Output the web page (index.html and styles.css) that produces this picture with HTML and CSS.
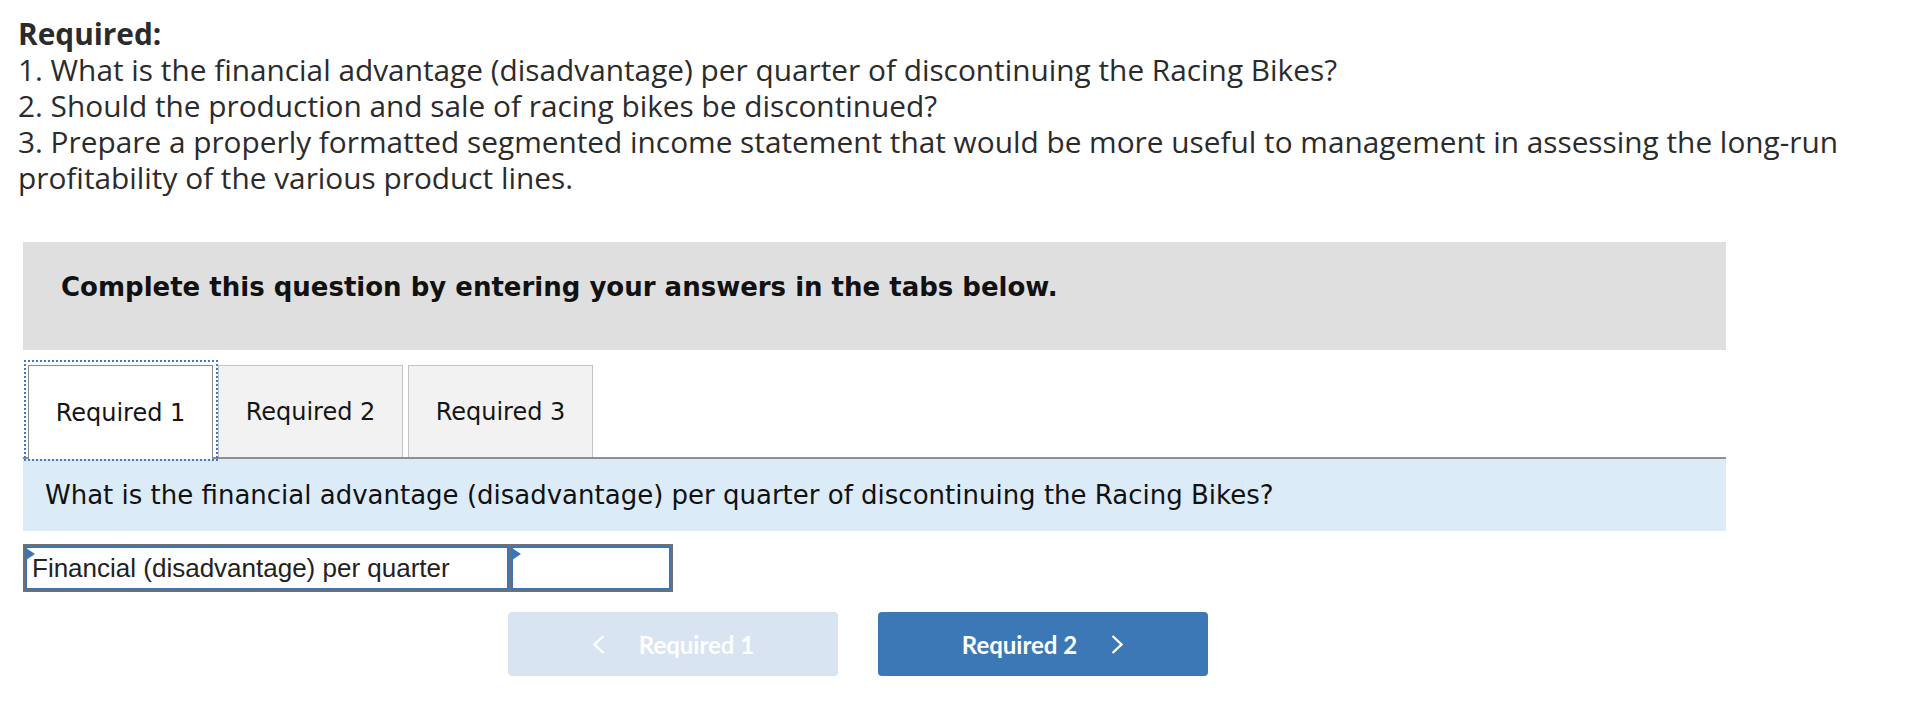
FILE: index.html
```html
<!DOCTYPE html>
<html lang="en">
<head>
<meta charset="utf-8">
<title>Required</title>
<link rel="stylesheet" href="styles.css">
</head>
<body>
<div class="required">
  <div class="req-line req-title">Required:</div>
  <div class="req-line">1. What is the financial advantage (disadvantage) per quarter of discontinuing the Racing Bikes?</div>
  <div class="req-line">2. Should the production and sale of racing bikes be discontinued?</div>
  <div class="req-line">3. Prepare a properly formatted segmented income statement that would be more useful to management in assessing the long-run profitability of the various product lines.</div>
</div>

<div class="panel">
  <div class="instructions">Complete this question by entering your answers in the tabs below.</div>

  <div class="tabs">
    <div class="tab tab-active">Required 1</div>
    <div class="tab">Required 2</div>
    <div class="tab">Required 3</div>
  </div>

  <div class="prompt">What is the financial advantage (disadvantage) per quarter of discontinuing the Racing Bikes?</div>

  <div class="grid">
    <div class="cell cell-label">Financial (disadvantage) per quarter</div>
    <div class="cell cell-input"></div>
  </div>

  <div class="nav">
    <div class="btn btn-prev">
      <svg class="chev" width="13" height="19" viewBox="0 0 13 19"><polyline points="11.5,1 2.5,9.5 11.5,18" fill="none" stroke="#ffffff" stroke-width="2.4"/></svg>
      <span>Required 1</span>
    </div>
    <div class="btn btn-next">
      <span>Required 2</span>
      <svg class="chev" width="13" height="19" viewBox="0 0 13 19"><polyline points="1.5,1 10.5,9.5 1.5,18" fill="none" stroke="#ffffff" stroke-width="2.4"/></svg>
    </div>
  </div>
</div>
</body>
</html>
```
FILE: styles.css
```css
html, body {
  margin: 0;
  padding: 0;
  background: #ffffff;
}

.required {
  padding: 16px 0 0 18px;
  font-family: "Open Sans", "Lato", sans-serif;
  font-size: 29.8px;
  line-height: 36px;
  color: #2b2b2b;
}

.req-title {
  font-weight: 700;
}

.panel {
  margin: 46px 0 0 23px;
  width: 1703px;
}

.instructions {
  background: #dfdfdf;
  padding: 30px 38px 48px;
  font-family: "DejaVu Sans", Verdana, sans-serif;
  font-weight: 700;
  font-size: 26px;
  line-height: 30px;
  color: #111111;
}

.tabs {
  display: flex;
  align-items: flex-start;
  margin-top: 15px;
  padding-left: 5px;
  gap: 5px;
  border-bottom: 2px solid #8f8f8f;
  height: 92px;
}

.tab {
  box-sizing: border-box;
  width: 185px;
  height: 92px;
  display: flex;
  align-items: center;
  justify-content: center;
  background: #f2f2f2;
  border: 1px solid #c4c4c4;
  border-bottom: none;
  font-family: "DejaVu Sans", Verdana, sans-serif;
  font-size: 24px;
  color: #151515;
}

.tab-active {
  position: relative;
  height: 94px;
  background: #ffffff;
  border-color: #8c8c8c;
}

.tab-active::after {
  content: "";
  position: absolute;
  left: -5px;
  right: -6px;
  top: -6px;
  bottom: -2px;
  background:
    repeating-linear-gradient(90deg, #3f7cc4 0 2px, transparent 2px 4px) top left / 100% 2px no-repeat,
    repeating-linear-gradient(90deg, #3f7cc4 0 2px, transparent 2px 4px) bottom left / 100% 2px no-repeat,
    repeating-linear-gradient(180deg, #3f7cc4 0 2px, transparent 2px 4px) top left / 2px 100% no-repeat,
    repeating-linear-gradient(180deg, #3f7cc4 0 2px, transparent 2px 4px) top right / 2px 100% no-repeat;
}

.prompt {
  height: 72px;
  display: flex;
  align-items: center;
  padding: 0 22px;
  background: #dbebf8;
  font-family: "DejaVu Sans", Verdana, sans-serif;
  font-size: 26px;
  color: #111111;
}

.grid {
  display: flex;
  gap: 2px;
  width: 646px;
  margin-top: 13px;
  padding: 2px;
  background: #707070;
}

.cell {
  position: relative;
  box-sizing: border-box;
  height: 44px;
  border: 2px solid #3d74b7;
  background: #ffffff;
}

.cell::before {
  content: "";
  position: absolute;
  left: -1px;
  top: 0;
  border-left: 9px solid #3d74b7;
  border-top: 6px solid transparent;
  border-bottom: 6px solid transparent;
}

.cell-label {
  width: 484px;
  padding-left: 5px;
  font-family: "Liberation Sans", Arial, sans-serif;
  font-size: 26px;
  line-height: 40px;
  color: #222222;
  white-space: nowrap;
}

.cell-input {
  width: 160px;
}

.nav {
  display: flex;
  gap: 40px;
  margin-top: 20px;
  padding-left: 485px;
}

.btn {
  width: 330px;
  height: 64px;
  border-radius: 4px;
  display: flex;
  align-items: center;
  justify-content: center;
  gap: 34px;
  font-family: "Lato", "Roboto", sans-serif;
  font-weight: 700;
  font-size: 24px;
  color: #ffffff;
}

.btn-prev {
  background: #d8e4f1;
}

.btn-next {
  background: #3c77b6;
}

.chev {
  display: block;
}
```
